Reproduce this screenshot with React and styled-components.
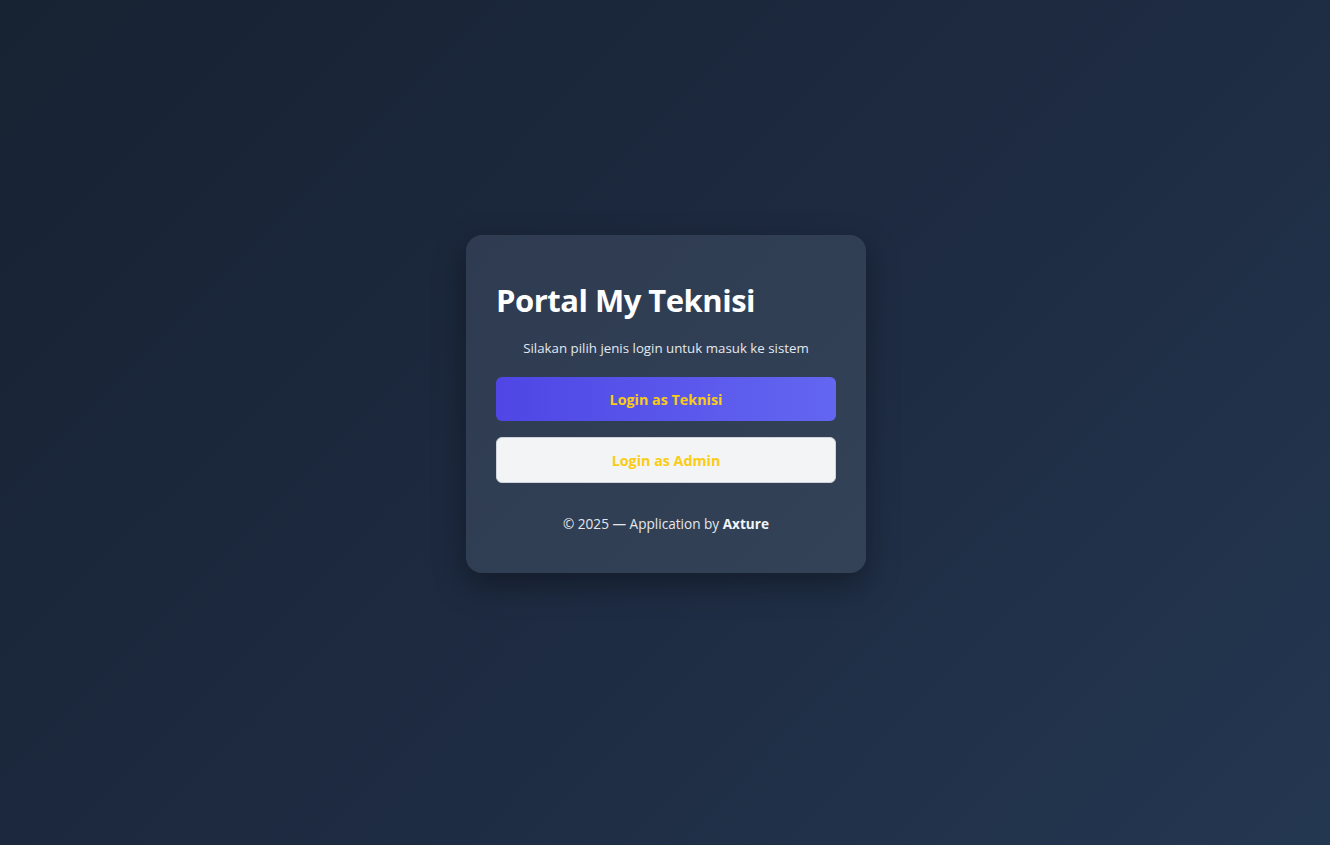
import React from "react";
import styled, { createGlobalStyle } from "styled-components";

const GlobalStyle = createGlobalStyle`
  * { box-sizing: border-box; }
  html, body { margin: 0; padding: 0; height: 100%; }
  body {
    font-family: "Open Sans", "Noto Sans", sans-serif;
    background: linear-gradient(135deg, #172232 0%, #1d2a40 50%, #243751 100%);
  }
  #root { min-height: 100vh; }
`;

const Page = styled.div`
  min-height: 100vh;
  display: flex;
  align-items: center;
  justify-content: center;
  padding: 0 0 37px 2px;
`;

const Card = styled.div`
  width: 400px;
  padding: 40px 30px 39px;
  border-radius: 16px;
  background: linear-gradient(135deg, #2e3b50 0%, #334257 100%);
  box-shadow: 0 12px 32px rgba(0, 0, 0, 0.35);
  display: flex;
  flex-direction: column;
`;

const Title = styled.h1`
  margin: 6px 0 0;
  font-size: 31px;
  line-height: 38px;
  font-weight: 700;
  color: #ffffff;
  letter-spacing: -0.5px;
`;

const Subtitle = styled.p`
  margin: 19px 0 19px;
  font-size: 13.3px;
  line-height: 20px;
  color: #e2e8f0;
  text-align: center;
`;

const Button = styled.button`
  width: 100%;
  height: ${(p) => (p.$variant === "primary" ? "44px" : "46px")};
  border-radius: 6px;
  font-family: inherit;
  font-size: 14.3px;
  font-weight: 700;
  color: #facc15;
  cursor: pointer;
  border: ${(p) => (p.$variant === "primary" ? "none" : "1px solid #cfd4dc")};
  background: ${(p) =>
    p.$variant === "primary"
      ? "linear-gradient(90deg, #4f46e5 0%, #6366f1 100%)"
      : "#f3f4f6"};
  margin-bottom: ${(p) => (p.$variant === "primary" ? "16px" : "0")};
`;

const Footer = styled.p`
  margin: 31px 0 0;
  font-size: 13.6px;
  line-height: 20px;
  color: #e5e7eb;
  text-align: center;

  strong {
    font-weight: 700;
    color: #f1f5f9;
  }
`;

export default function App() {
  return (
    <>
      <GlobalStyle />
      <Page>
        <Card>
          <Title>Portal My Teknisi</Title>
          <Subtitle>Silakan pilih jenis login untuk masuk ke sistem</Subtitle>
          <Button $variant="primary">Login as Teknisi</Button>
          <Button $variant="secondary">Login as Admin</Button>
          <Footer>
            © 2025 — Application by <strong>Axture</strong>
          </Footer>
        </Card>
      </Page>
    </>
  );
}
